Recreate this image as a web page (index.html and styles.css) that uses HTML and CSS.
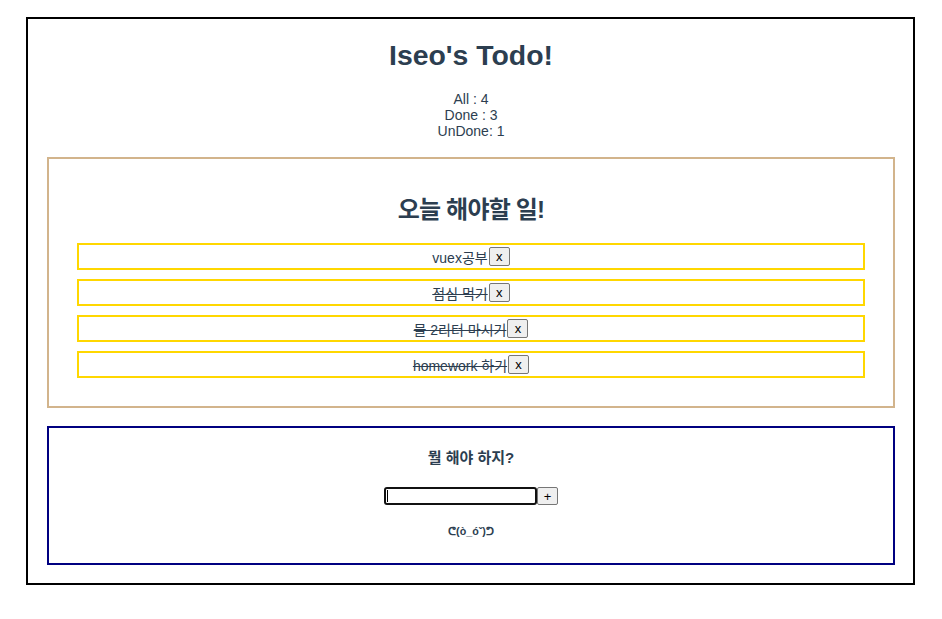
FILE: index.html
```html
<!DOCTYPE html>
<html lang="ko">
<head>
<meta charset="utf-8">
<title>Iseo's Todo!</title>
<link rel="stylesheet" href="styles.css">
</head>
<body>
<div class="app">
  <h1 class="title">Iseo's Todo!</h1>
  <div class="stats">
    <div>All : 4</div>
    <div>Done : 3</div>
    <div>UnDone: 1</div>
  </div>
  <section class="today">
    <h2 class="today-title">오늘 해야할 일!</h2>
    <ul class="list">
      <li class="item"><span class="item-text">vuex공부</span><button class="btn">x</button></li>
      <li class="item done"><span class="item-text">점심 먹기</span><button class="btn">x</button></li>
      <li class="item done"><span class="item-text">물 2리터 마시기</span><button class="btn">x</button></li>
      <li class="item done"><span class="item-text">homework 하기</span><button class="btn">x</button></li>
    </ul>
  </section>
  <section class="add">
    <h4 class="add-title">뭘 해야 하지?</h4>
    <div class="form"><span class="field"><input class="input" type="text"></span><button class="btn btn-add">+</button></div>
    <h6 class="face">ᕦ(ò_óˇ)ᕤ</h6>
  </section>
</div>
</body>
</html>
```

FILE: styles.css
```css
html, body {
  margin: 0;
  padding: 0;
  background: #fff;
}

body {
  font-family: "Liberation Sans", "Noto Sans CJK KR", sans-serif;
  color: #2c3e50;
}

.app {
  margin: 17px 27px 0 26px;
  border: 2px solid #000;
  padding: 20px 18px 18px 19px;
  text-align: center;
}

.title {
  margin: 0;
  font-size: 28.4px;
  font-weight: 700;
  line-height: 32px;
}

.stats {
  margin-top: 20px;
  font-size: 14px;
  line-height: 16px;
}

.today {
  margin-top: 18px;
  border: 2px solid #d2b48c;
  padding: 36px 28px 28px;
}

.today-title {
  margin: 0;
  font-size: 24px;
  font-weight: 700;
  line-height: 30px;
  letter-spacing: -0.8px;
}

.list {
  list-style: none;
  margin: 18px 0 0;
  padding: 0;
  display: flex;
  flex-direction: column;
  gap: 9px;
}

.item {
  height: 23px;
  border: 2px solid #ffd700;
  display: flex;
  justify-content: center;
  align-items: center;
  font-size: 14px;
}

.item.done .item-text {
  text-decoration: line-through;
}

.btn {
  box-sizing: border-box;
  height: 19px;
  min-width: 21px;
  padding: 0 6px;
  margin: 0 0 0 1px;
  font-family: "Liberation Sans", sans-serif;
  font-size: 13px;
  line-height: 15px;
  color: #000;
  background: #efefef;
  border: 1px solid #767676;
  border-radius: 2px;
}

.add {
  margin-top: 18px;
  border: 2px solid #000080;
  padding: 20px 20px 25px;
}

.add-title {
  margin: 0;
  font-size: 15px;
  font-weight: 700;
  line-height: 20px;
}

.form {
  margin-top: 19px;
  display: flex;
  justify-content: center;
  align-items: center;
  height: 18px;
}

.field {
  position: relative;
  display: block;
}

.field::after {
  content: "";
  position: absolute;
  left: 3px;
  top: 3px;
  width: 1px;
  height: 12px;
  background: #000;
}

.input {
  box-sizing: border-box;
  display: block;
  width: 153px;
  height: 18px;
  margin: 0;
  padding: 0 3px;
  border: 2px solid #111;
  border-radius: 3px;
  background: #fff;
  outline: none;
}

.btn-add {
  height: 18px;
  width: 21px;
  padding: 0;
  margin: 0;
}

.face {
  margin: 20px 0 0;
  font-size: 10.72px;
  font-weight: 700;
  line-height: 13px;
}
```
